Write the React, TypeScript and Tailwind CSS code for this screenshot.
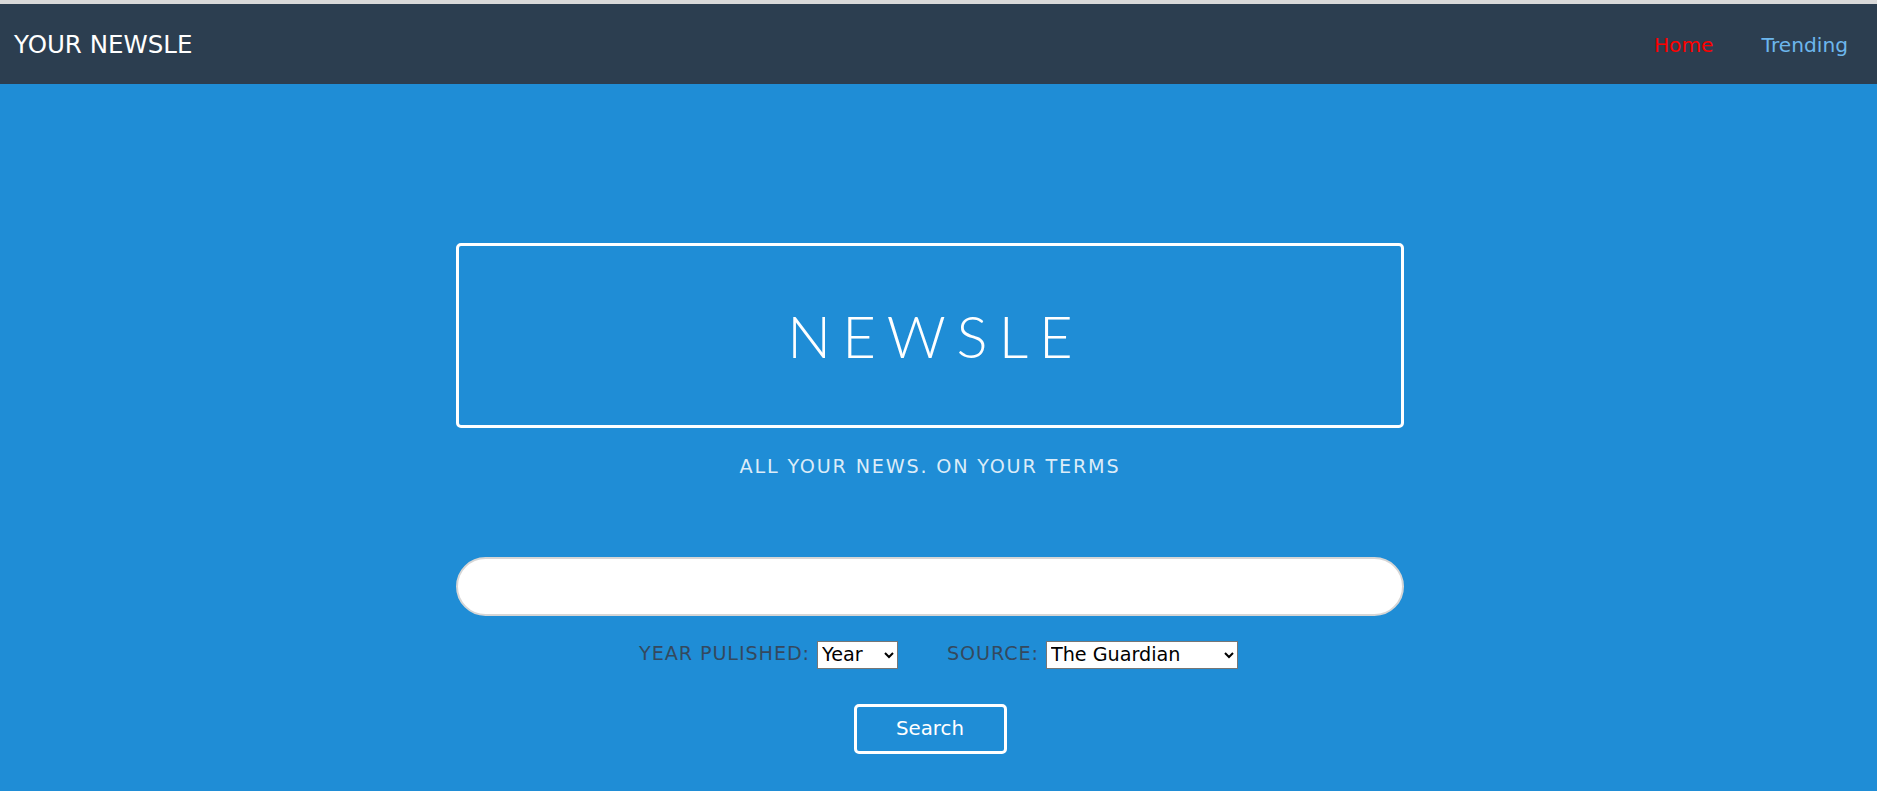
import React, { useState } from 'react';

const SOURCES = ['The Guardian', 'BBC News', 'Reuters', 'Al Jazeera'];
const YEARS = ['Year', '2024', '2023', '2022', '2021', '2020'];

export default function App() {
    const [query, setQuery] = useState('');
    const [year, setYear] = useState('Year');
    const [source, setSource] = useState('The Guardian');

    return (
        <div className="min-h-[791px] w-[1877px] bg-[#1f8dd6] font-['DejaVu_Sans',sans-serif]">
            {/* Top bar */}
            <nav className="h-[84px] border-t-[4px] border-[#d9d9d9] bg-[#2c3e50] w-full">
                <div className="w-[1860px] h-full flex items-center justify-between pl-[14px] pr-[12px] pt-[2px]">
                    <span className="text-white text-[24.5px] leading-none">YOUR NEWSLE</span>
                    <div className="flex items-center gap-[48px] text-[20.2px]">
                        <a className="text-[#ff0000]">Home</a>
                        <a className="text-[#6cb6ec]">Trending</a>
                    </div>
                </div>
            </nav>

            {/* Hero */}
            <main className="w-[1860px] flex flex-col items-center pt-[159px] pb-[37px]">
                <div className="w-[948px] h-[185px] border-[3px] border-white rounded-[5px] flex items-center justify-center">
                    <h1 className="text-white text-[58px] font-light font-['Lato',sans-serif] tracking-[11px] pl-[11px] leading-none">
                        NEWSLE
                    </h1>
                </div>

                <p className="mt-[29px] text-[#dcecf8] text-[19.2px] tracking-[1.8px] leading-none">
                    ALL YOUR NEWS. ON YOUR TERMS
                </p>

                <input
                    value={query}
                    onChange={(e) => setQuery(e.target.value)}
                    className="mt-[81px] w-[948px] h-[59px] bg-white rounded-full border-2 border-[#d6d6d6] px-6 text-[19px] outline-none"
                />

                <div className="mt-[24px] pl-[17px] flex items-center text-[19.2px] text-[#34495e] tracking-[0.9px]">
                    <label className="mr-[7px]">YEAR PULISHED:</label>
                    <select
                        value={year}
                        onChange={(e) => setYear(e.target.value)}
                        className="w-[81px] h-[28px] bg-white border border-[#767676] text-black text-[19.2px] tracking-normal"
                    >
                        {YEARS.map((y) => <option key={y}>{y}</option>)}
                    </select>
                    <label className="ml-[49px] mr-[7px]">SOURCE:</label>
                    <select
                        value={source}
                        onChange={(e) => setSource(e.target.value)}
                        className="w-[192px] h-[28px] bg-white border border-[#767676] text-black text-[19.2px] tracking-normal"
                    >
                        {SOURCES.map((s) => <option key={s}>{s}</option>)}
                    </select>
                </div>

                <button className="mt-[35px] w-[153px] h-[50px] border-[3px] border-white rounded-[5px] text-white text-[19.8px]">
                    Search
                </button>
            </main>
        </div>
    );
}
